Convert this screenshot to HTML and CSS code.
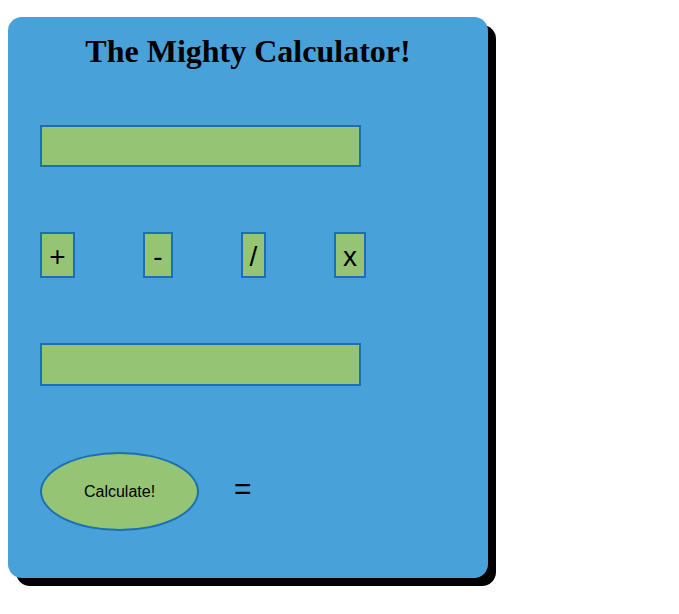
FILE: index.html
```html
<!DOCTYPE html>
<html>
<head>
<meta charset="utf-8">
<title>The Mighty Calculator!</title>
<link rel="stylesheet" href="styles.css">
</head>
<body>
<div class="calc">
  <h1 class="title">The Mighty Calculator!</h1>
  <input class="field field-first" type="text">
  <div class="ops">
    <button class="op op-plus">+</button>
    <button class="op op-minus">-</button>
    <button class="op op-div">/</button>
    <button class="op op-mul">x</button>
  </div>
  <input class="field field-second" type="text">
  <div class="result-row">
    <button class="calc-btn">Calculate!</button>
    <span class="equals">=</span>
  </div>
</div>
</body>
</html>
```

FILE: styles.css
```css
html, body {
  margin: 0;
  padding: 0;
  background: #ffffff;
}

body {
  padding: 17px 8px 8px 8px;
}

.calc {
  box-sizing: border-box;
  width: 480px;
  height: 561px;
  background: #48a1d9;
  border-radius: 14px;
  box-shadow: 8px 8px 0 #000000;
  padding: 0 32px;
  display: flex;
  flex-direction: column;
  align-items: flex-start;
}

.title {
  align-self: stretch;
  margin: 16px -32px 0 -32px;
  font-family: "Liberation Serif", "Times New Roman", serif;
  font-size: 32px;
  font-weight: bold;
  line-height: 37px;
  text-align: center;
  color: #000000;
}

.field {
  box-sizing: border-box;
  width: 321px;
  height: 42px;
  margin: 55px 0 0 0;
  padding: 0 6px;
  background: #94c474;
  border: 2px solid #1c6fb4;
  outline: none;
  font-family: "Liberation Sans", Arial, sans-serif;
  font-size: 16px;
}

.field-second {
  height: 43px;
  margin-top: 65px;
}

.ops {
  display: flex;
  gap: 68px;
  margin-top: 65px;
}

.op {
  box-sizing: border-box;
  height: 46px;
  padding: 4px 0 0 0;
  background: #94c474;
  border: 2px solid #1c6fb4;
  font-family: "Liberation Sans", Arial, sans-serif;
  font-size: 28px;
  line-height: 1;
  color: #000000;
  display: flex;
  align-items: center;
  justify-content: center;
}

.op-plus { width: 35px; }
.op-minus { width: 30px; }
.op-div { width: 25px; }
.op-mul { width: 32px; }

.result-row {
  display: flex;
  align-items: center;
  margin-top: 66px;
}

.calc-btn {
  box-sizing: border-box;
  width: 159px;
  height: 79px;
  padding: 0;
  background: #94c474;
  border: 2px solid #1c6fb4;
  border-radius: 50%;
  font-family: "Liberation Sans", Arial, sans-serif;
  font-size: 16px;
  color: #000000;
}

.equals {
  margin-left: 35px;
  margin-top: -6px;
  font-family: "Liberation Sans", Arial, sans-serif;
  font-size: 30px;
  color: #000000;
}
```
